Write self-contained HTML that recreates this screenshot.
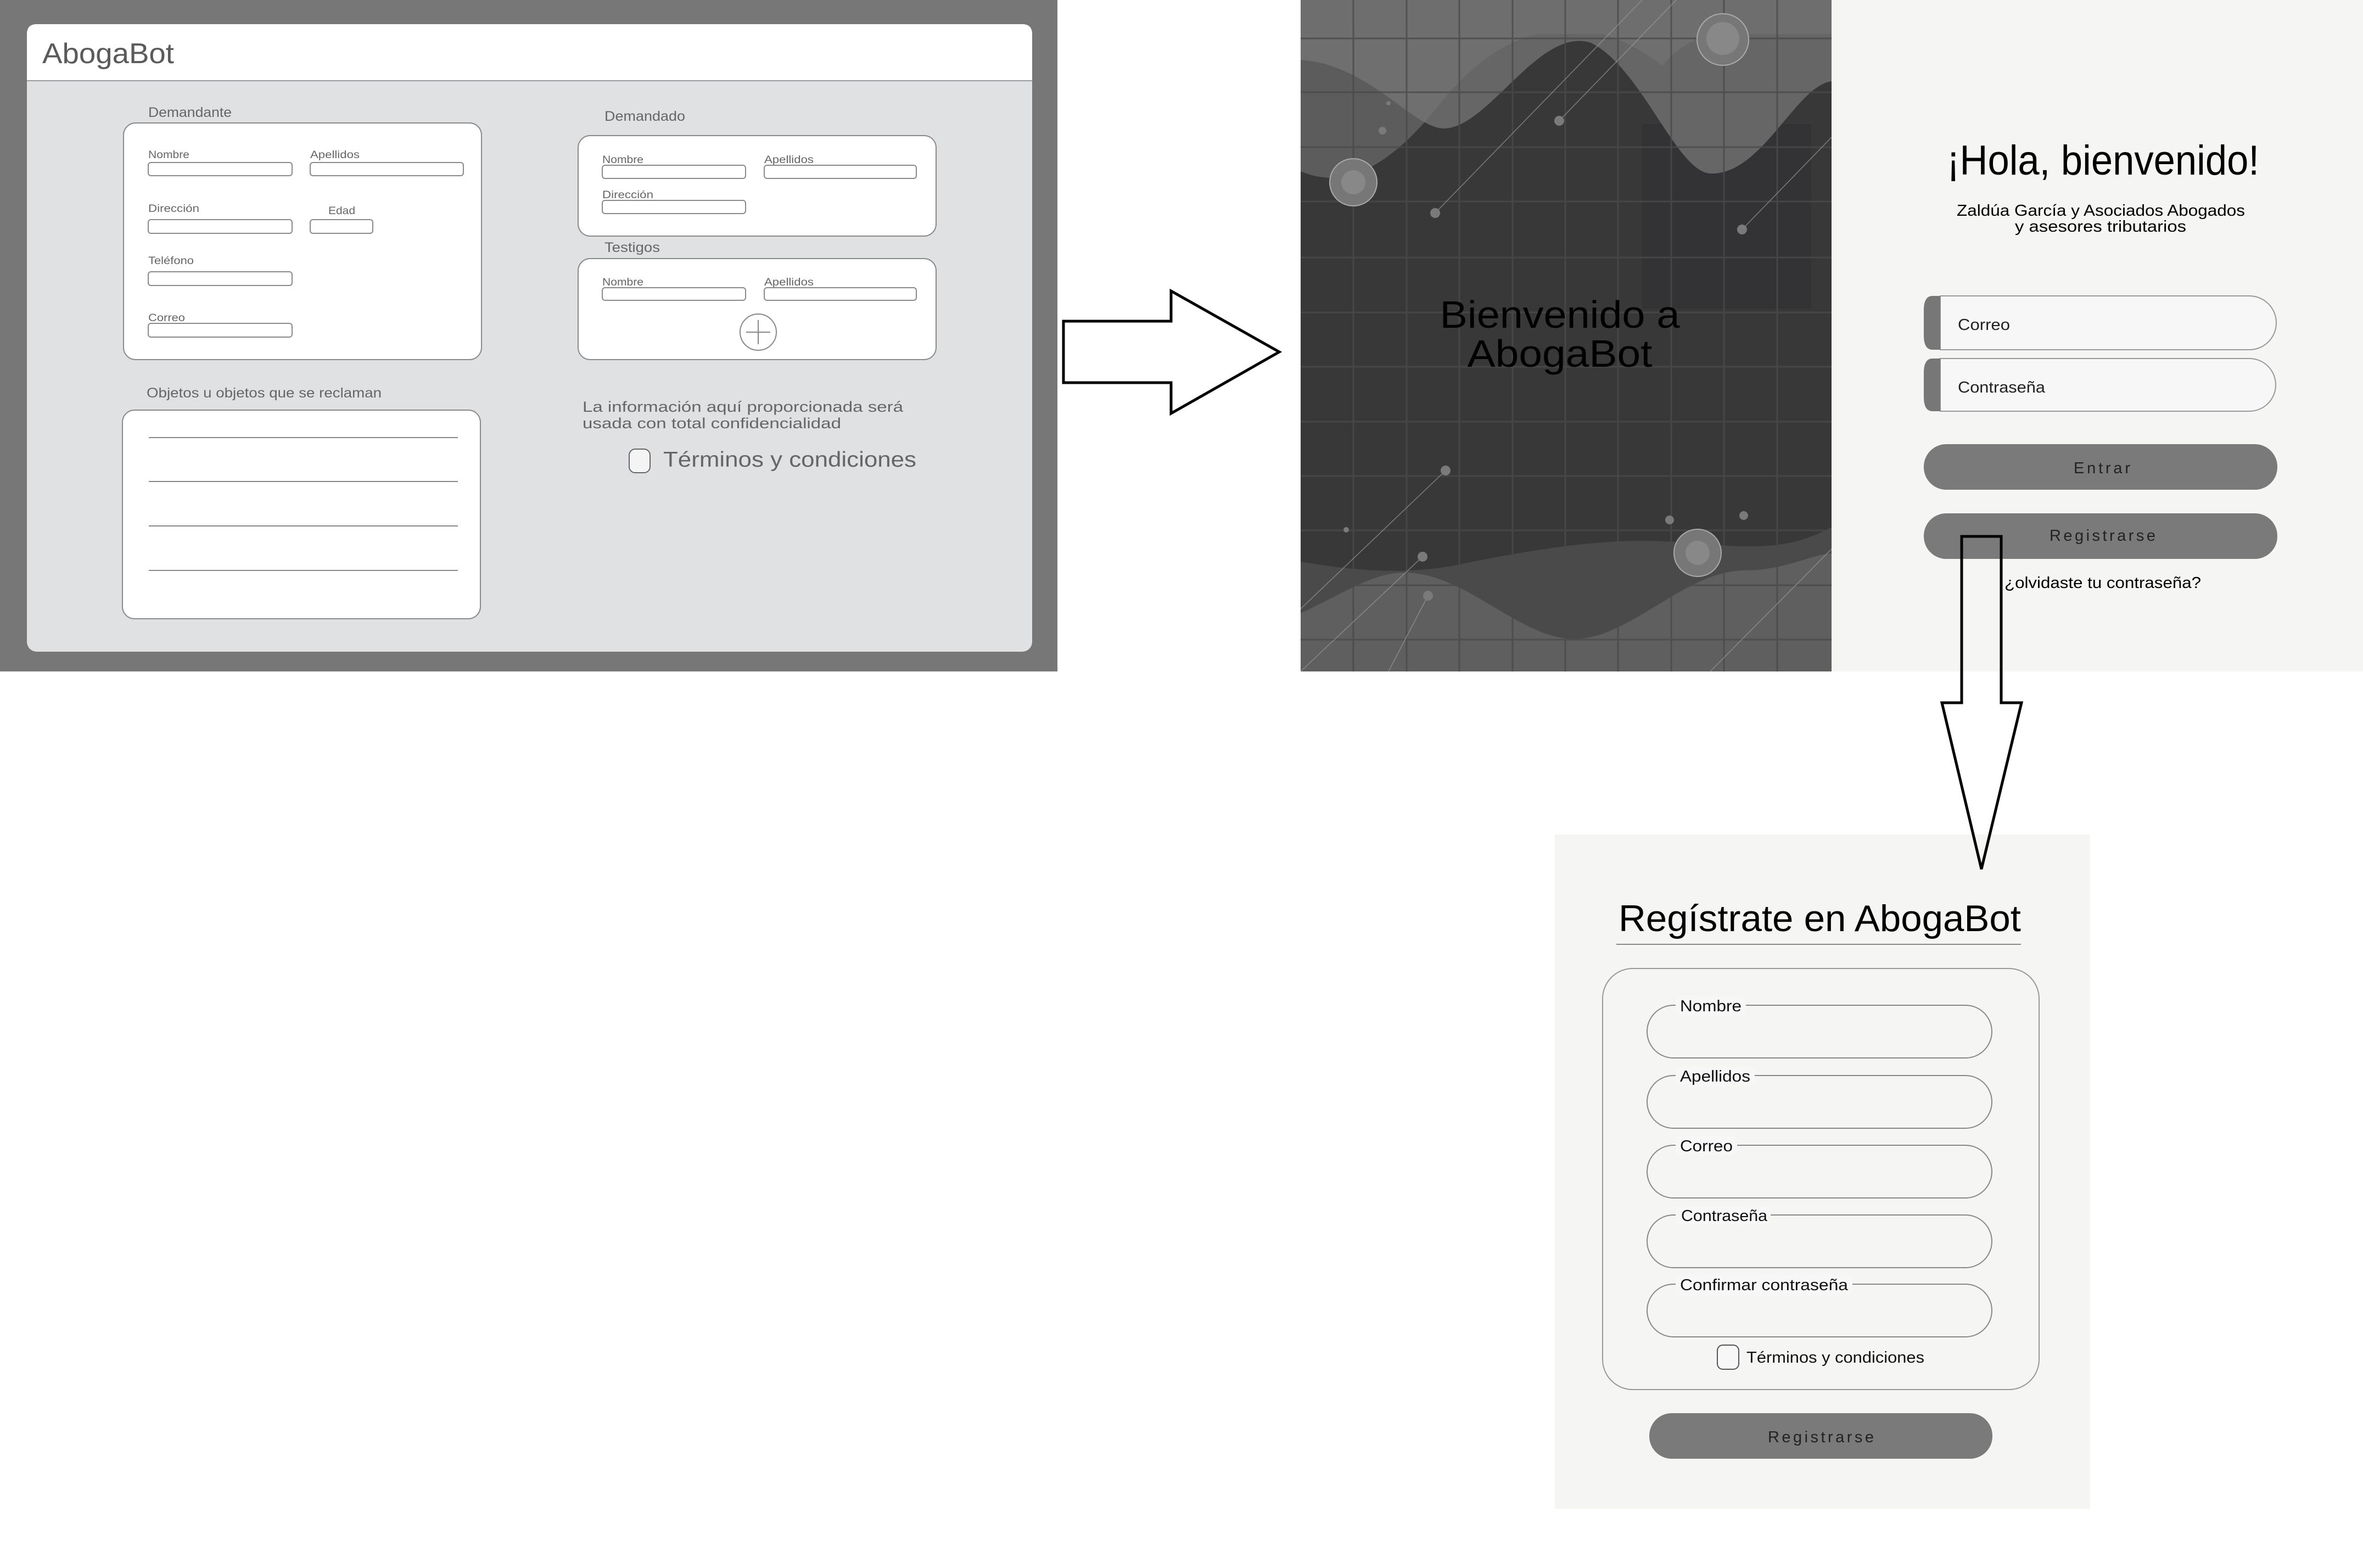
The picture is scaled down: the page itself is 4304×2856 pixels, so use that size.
<!DOCTYPE html>
<html><head><meta charset="utf-8"><style>
html,body{margin:0;padding:0;background:#fff;width:4304px;height:2856px;overflow:hidden}
svg{display:block}
text{font-family:"Liberation Sans",sans-serif}
</style></head><body>
<svg width="4304" height="2856" viewBox="0 0 4304 2856" xmlns="http://www.w3.org/2000/svg">
<rect x="0" y="0" width="4304" height="2856" fill="#fff"/>
<!-- LEFT PANEL -->
<rect x="0" y="0" width="1926" height="1223" fill="#777"/>
<rect x="49" y="44" width="1831" height="1143" rx="18" fill="#e0e1e3"/>
<path d="M49,147 V62 Q49,44 67,44 H1862 Q1880,44 1880,62 V147 Z" fill="#fff"/>
<line x1="49" y1="147" x2="1880" y2="147" stroke="#9a9a9a" stroke-width="2"/>
<g fill="#5a5a5a">
<text x="77" y="115" font-size="52" textLength="240" lengthAdjust="spacingAndGlyphs">AbogaBot</text>
</g>
<g fill="#666">
<text x="270" y="213" font-size="25" textLength="152" lengthAdjust="spacingAndGlyphs">Demandante</text>
<text x="267" y="724" font-size="25" textLength="428" lengthAdjust="spacingAndGlyphs">Objetos u objetos que se reclaman</text>
<text x="1101" y="220" font-size="25" textLength="147" lengthAdjust="spacingAndGlyphs">Demandado</text>
<text x="1101" y="459" font-size="25" textLength="101" lengthAdjust="spacingAndGlyphs">Testigos</text>
</g>
<g fill="#fff" stroke="#8a8a8a" stroke-width="2">
<rect x="225" y="224" width="652" height="431" rx="22"/>
<rect x="223" y="747" width="652" height="380" rx="22"/>
<rect x="1053" y="247" width="652" height="183" rx="22"/>
<rect x="1053" y="471" width="652" height="184" rx="22"/>
</g>
<g fill="#666" font-size="19">
<text x="270" y="288" textLength="75" lengthAdjust="spacingAndGlyphs">Nombre</text>
<text x="565" y="288" textLength="90" lengthAdjust="spacingAndGlyphs">Apellidos</text>
<text x="270" y="386" textLength="93" lengthAdjust="spacingAndGlyphs">Dirección</text>
<text x="598" y="390" textLength="49" lengthAdjust="spacingAndGlyphs">Edad</text>
<text x="270" y="481" textLength="83" lengthAdjust="spacingAndGlyphs">Teléfono</text>
<text x="270" y="585" textLength="67" lengthAdjust="spacingAndGlyphs">Correo</text>
<text x="1097" y="297" textLength="75" lengthAdjust="spacingAndGlyphs">Nombre</text>
<text x="1392" y="297" textLength="90" lengthAdjust="spacingAndGlyphs">Apellidos</text>
<text x="1097" y="361" textLength="93" lengthAdjust="spacingAndGlyphs">Dirección</text>
<text x="1097" y="520" textLength="75" lengthAdjust="spacingAndGlyphs">Nombre</text>
<text x="1392" y="520" textLength="90" lengthAdjust="spacingAndGlyphs">Apellidos</text>
</g>
<g fill="#fff" stroke="#8a8a8a" stroke-width="2">
<rect x="270" y="296" width="262" height="24" rx="5"/>
<rect x="565" y="296" width="279" height="24" rx="5"/>
<rect x="270" y="400" width="262" height="25" rx="5"/>
<rect x="565" y="400" width="114" height="25" rx="5"/>
<rect x="270" y="495" width="262" height="25" rx="5"/>
<rect x="270" y="589" width="262" height="25" rx="5"/>
<rect x="1097" y="301" width="261" height="24" rx="5"/>
<rect x="1392" y="301" width="277" height="24" rx="5"/>
<rect x="1097" y="365" width="261" height="24" rx="5"/>
<rect x="1097" y="524" width="261" height="23" rx="5"/>
<rect x="1392" y="524" width="277" height="23" rx="5"/>
</g>
<g stroke="#888" stroke-width="2">
<line x1="271" y1="797" x2="834" y2="797"/>
<line x1="271" y1="877" x2="834" y2="877"/>
<line x1="271" y1="958" x2="834" y2="958"/>
<line x1="271" y1="1039" x2="834" y2="1039"/>
<circle cx="1381" cy="605" r="33" fill="#fff"/>
<line x1="1359" y1="605" x2="1403" y2="605"/>
<line x1="1381" y1="583" x2="1381" y2="627"/>
</g>
<g fill="#666">
<text x="1061" y="750" font-size="27" textLength="584" lengthAdjust="spacingAndGlyphs">La información aquí proporcionada será</text>
<text x="1061" y="780" font-size="27" textLength="471" lengthAdjust="spacingAndGlyphs">usada con total confidencialidad</text>
<text x="1208" y="850" font-size="39" textLength="461" lengthAdjust="spacingAndGlyphs">Términos y condiciones</text>
</g>
<rect x="1146" y="818" width="38" height="43" rx="11" fill="#f4f4f4" stroke="#666" stroke-width="2"/>

<!-- RIGHT ARROW -->
<polygon points="1937,585 2133,585 2133,530 2330,641 2133,753 2133,697 1937,697" fill="#fff" stroke="#000" stroke-width="5" stroke-linejoin="miter"/>

<!-- DARK IMAGE -->
<svg x="2369" y="0" width="967" height="1223" viewBox="0 0 967 1223">
<rect width="967" height="1223" fill="#383838"/>
<rect x="622" y="226" width="308" height="336" fill="#333336"/>
<path d="M0,109 C124,117 205,234 261,234 C342,234 435,47 529,78 C622,125 684,312 746,316 C840,320 902,156 967,148 L967,0 L0,0 Z" fill="#666"/>
<path d="M0,312 C75,344 155,312 249,195 C342,78 420,55 498,55 C560,55 620,90 660,120 C700,60 800,40 967,40 L967,0 L0,0 Z" fill="#747474" opacity="0.6"/>
<path d="M0,0 H967 V62 H0 Z" fill="#6e6e6e"/>
<path d="M0,1023 C100,1040 187,1047 280,1030 C400,1005 520,985 620,985 C760,985 860,1020 967,960 L967,1223 L0,1223 Z" fill="#4a4a4a"/>
<path d="M0,1117 C80,1080 130,1043 190,1043 C300,1043 400,1164 498,1164 C600,1164 700,1039 809,1039 C880,1039 930,1010 967,1008 L967,1223 L0,1223 Z" fill="#5f5f5f"/>
<g stroke="#4a4a4a" stroke-width="3" opacity="0.8">
<line x1="96" y1="0" x2="96" y2="1223"/><line x1="193" y1="0" x2="193" y2="1223"/><line x1="289" y1="0" x2="289" y2="1223"/><line x1="386" y1="0" x2="386" y2="1223"/><line x1="482" y1="0" x2="482" y2="1223"/><line x1="578" y1="0" x2="578" y2="1223"/><line x1="675" y1="0" x2="675" y2="1223"/><line x1="771" y1="0" x2="771" y2="1223"/><line x1="868" y1="0" x2="868" y2="1223"/>
<line x1="0" y1="70" x2="967" y2="70"/><line x1="0" y1="168" x2="967" y2="168"/><line x1="0" y1="268" x2="967" y2="268"/><line x1="0" y1="367" x2="967" y2="367"/><line x1="0" y1="469" x2="967" y2="469"/><line x1="0" y1="569" x2="967" y2="569"/><line x1="0" y1="668" x2="967" y2="668"/><line x1="0" y1="768" x2="967" y2="768"/><line x1="0" y1="867" x2="967" y2="867"/><line x1="0" y1="966" x2="967" y2="966"/><line x1="0" y1="1066" x2="967" y2="1066"/><line x1="0" y1="1165" x2="967" y2="1165"/>
</g>
<g stroke="#9a9a9a" stroke-width="1.5" opacity="0.7">
<line x1="0" y1="1109" x2="264" y2="857"/><line x1="245" y1="388" x2="622" y2="0"/><line x1="471" y1="220" x2="684" y2="0"/><line x1="804" y1="418" x2="967" y2="250"/><line x1="967" y1="1000" x2="746" y2="1223"/><line x1="222" y1="1014" x2="0" y2="1223"/><line x1="160" y1="1223" x2="232" y2="1085"/>
</g>
<g fill="#7a7a7a">
<circle cx="471" cy="220" r="9"/><circle cx="245" cy="388" r="9"/><circle cx="804" cy="418" r="9"/><circle cx="264" cy="857" r="9"/><circle cx="222" cy="1014" r="9"/><circle cx="232" cy="1085" r="9"/><circle cx="672" cy="947" r="8"/><circle cx="807" cy="939" r="8"/><circle cx="149" cy="238" r="7"/><circle cx="160" cy="188" r="4"/><circle cx="83" cy="965" r="5"/>
</g>
<g stroke="#aaa" stroke-width="2">
<circle cx="769" cy="72" r="47" fill="#777"/><circle cx="96" cy="332" r="43" fill="#777"/><circle cx="723" cy="1007" r="43" fill="#777"/>
</g>
<g fill="#888"><circle cx="769" cy="70" r="30"/><circle cx="96" cy="332" r="22"/><circle cx="723" cy="1007" r="22"/></g>
<text x="472" y="597" font-size="70" text-anchor="middle" fill="#000" textLength="437" lengthAdjust="spacingAndGlyphs">Bienvenido a</text>
<text x="472" y="668" font-size="70" text-anchor="middle" fill="#000" textLength="337" lengthAdjust="spacingAndGlyphs">AbogaBot</text>
</svg>

<!-- LOGIN PANEL -->
<rect x="3336" y="0" width="968" height="1223" fill="#f5f5f3"/>
<text x="3546" y="318" font-size="76" fill="#000" textLength="569" lengthAdjust="spacingAndGlyphs">¡Hola, bienvenido!</text>
<text x="3564" y="393" font-size="29" fill="#000" textLength="525" lengthAdjust="spacingAndGlyphs">Zaldúa García y Asociados  Abogados</text>
<text x="3670" y="422" font-size="29" fill="#000" textLength="312" lengthAdjust="spacingAndGlyphs">y asesores tributarios</text>
<path d="M3534,539 H4097 A49,49 0 0 1 4097,637 H3534 Z" fill="#f7f7f7" stroke="#999" stroke-width="2"/>
<path d="M3534,539 H3520 Q3504,539 3504,565 V611 Q3504,637 3520,637 H3534 Z" fill="#777"/>
<path d="M3534,653 H4097 A48,48 0 0 1 4097,749 H3534 Z" fill="#f7f7f7" stroke="#999" stroke-width="2"/>
<path d="M3534,653 H3520 Q3504,653 3504,679 V723 Q3504,749 3520,749 H3534 Z" fill="#777"/>
<text x="3566" y="601" font-size="29" fill="#222" textLength="95" lengthAdjust="spacingAndGlyphs">Correo</text>
<text x="3566" y="715" font-size="29" fill="#222" textLength="159" lengthAdjust="spacingAndGlyphs">Contraseña</text>
<rect x="3504" y="809" width="644" height="83" rx="41" fill="#7a7a7a"/>
<rect x="3504" y="935" width="644" height="83" rx="41" fill="#7a7a7a"/>
<text x="3777" y="862" font-size="29" fill="#222" textLength="103" lengthAdjust="spacing">Entrar</text>
<text x="3733" y="985" font-size="29" fill="#222" textLength="193" lengthAdjust="spacing">Registrarse</text>
<text x="3651" y="1071" font-size="29" fill="#000" textLength="358" lengthAdjust="spacingAndGlyphs">¿olvidaste tu contraseña?</text>

<!-- REGISTER PANEL -->
<rect x="2832" y="1520" width="975" height="1228" fill="#f5f5f3"/>
<text x="2948" y="1696" font-size="68" fill="#000" textLength="733" lengthAdjust="spacingAndGlyphs">Regístrate en AbogaBot</text>
<line x1="2944" y1="1720" x2="3681" y2="1720" stroke="#888" stroke-width="2"/>
<rect x="2919" y="1764" width="795" height="767" rx="55" fill="none" stroke="#999" stroke-width="2"/>
<g fill="none" stroke="#888" stroke-width="2">
<rect x="3000" y="1831" width="628" height="96" rx="48"/>
<rect x="3000" y="1959" width="628" height="96" rx="48"/>
<rect x="3000" y="2086" width="628" height="96" rx="48"/>
<rect x="3000" y="2213" width="628" height="96" rx="48"/>
<rect x="3000" y="2339" width="628" height="96" rx="48"/>
</g>
<g fill="#f7f7f7">
<rect x="3052" y="1815" width="128" height="34" rx="10"/>
<rect x="3052" y="1943" width="144" height="34" rx="10"/>
<rect x="3052" y="2070" width="112" height="34" rx="10"/>
<rect x="3052" y="2197" width="173" height="34" rx="10"/>
<rect x="3052" y="2323" width="322" height="34" rx="10"/>
</g>
<g fill="#111" font-size="29">
<text x="3060" y="1842" textLength="112" lengthAdjust="spacingAndGlyphs">Nombre</text>
<text x="3060" y="1970" textLength="128" lengthAdjust="spacingAndGlyphs">Apellidos</text>
<text x="3060" y="2097" textLength="96" lengthAdjust="spacingAndGlyphs">Correo</text>
<text x="3062" y="2224" textLength="157" lengthAdjust="spacingAndGlyphs">Contraseña</text>
<text x="3060" y="2350" textLength="306" lengthAdjust="spacingAndGlyphs">Confirmar contraseña</text>
<text x="3181" y="2482" textLength="324" lengthAdjust="spacingAndGlyphs">Términos y condiciones</text>
</g>
<rect x="3128" y="2450" width="39" height="44" rx="10" fill="#f7f7f7" stroke="#555" stroke-width="2"/>
<rect x="3004" y="2574" width="625" height="83" rx="41" fill="#7a7a7a"/>
<text x="3220" y="2627" font-size="29" fill="#222" textLength="193" lengthAdjust="spacing">Registrarse</text>

<!-- DOWN ARROW -->
<polygon points="3573,977 3645,977 3645,1280 3682,1280 3609,1583 3537,1280 3573,1280" fill="none" stroke="#000" stroke-width="5" stroke-linejoin="miter"/>
</svg>
</body></html>
